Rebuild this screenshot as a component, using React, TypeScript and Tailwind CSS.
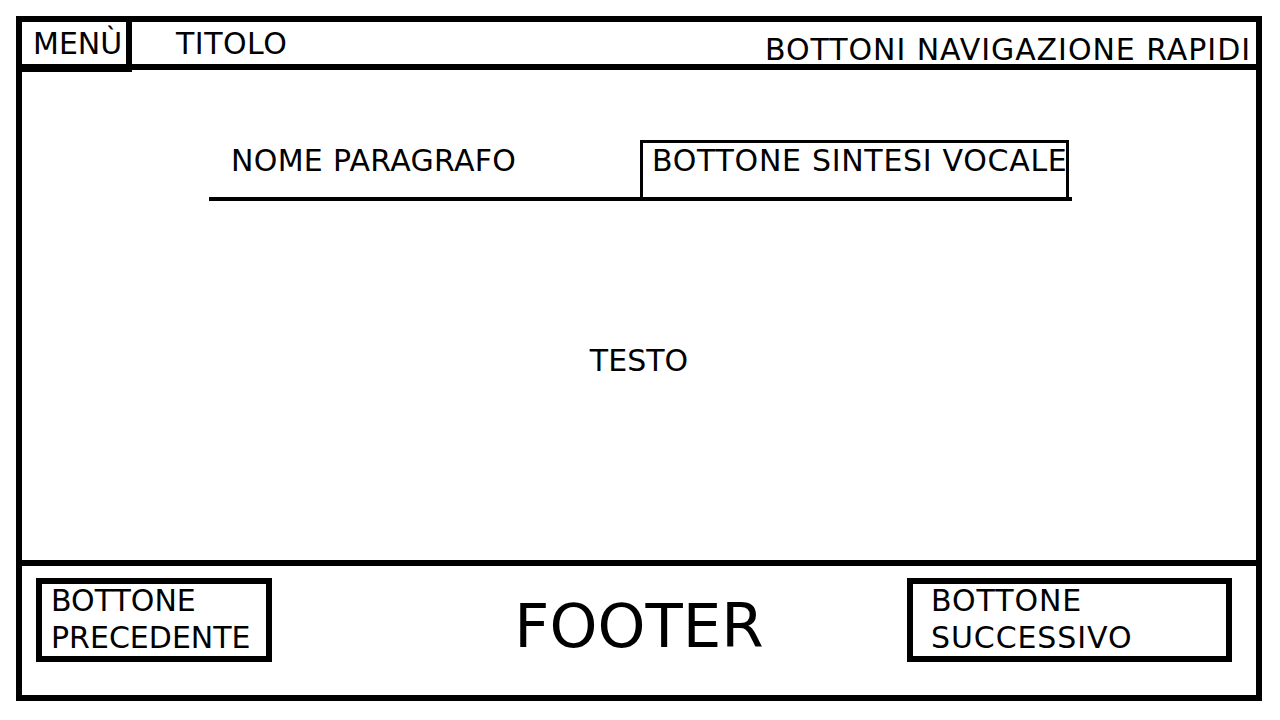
export default function App() {
  return (
    <div className="w-[1280px] h-[720px] bg-white text-black font-['DejaVu_Sans',sans-serif] pl-[16px] pt-[16px] overflow-hidden">
      <div className="w-[1246px] h-[685px] border-[6px] border-black flex flex-col">
        {/* Header */}
        <div className="h-[48px] shrink-0 border-b-[6px] border-black flex items-start">
          <div className="relative z-10 w-[110px] h-[50px] shrink-0 border-r-[6px] border-b-[6px] border-black pl-[11px] pt-[7px] text-[30px] leading-[30px]">
            MENÙ
          </div>
          <div className="ml-[44px] pt-[7px] text-[30px] leading-[30px] tracking-[0.5px]">TITOLO</div>
          <div className="ml-auto pr-[5px] pt-[13px] text-[30px] leading-[30px] tracking-[0.95px]">
            BOTTONI NAVIGAZIONE RAPIDI
          </div>
        </div>

        {/* Main */}
        <div className="flex-1 flex flex-col">
          <div className="ml-[187px] mt-[70px] w-[863px] flex items-start border-b-[4px] border-black">
            <div className="w-[431px] shrink-0 pl-[22px] pt-[6px] text-[30px] leading-[30px] tracking-[0.3px]">
              NOME PARAGRAFO
            </div>
            <div className="w-[429px] h-[57px] shrink-0 border-l-[3px] border-t-[3px] border-r-[3px] border-black pl-[9px] pt-[3px] text-[30px] leading-[30px] tracking-[0.7px] whitespace-nowrap">
              BOTTONE SINTESI VOCALE
            </div>
          </div>
          <div className="mt-[145px] text-center text-[30px] leading-[30px]">TESTO</div>
        </div>

        {/* Footer */}
        <div className="h-[135px] shrink-0 border-t-[6px] border-black grid grid-cols-[1fr_auto_1fr] items-start pl-[14px] pr-[14px]">
          <div className="justify-self-start mt-[12px] w-[236px] h-[84px] border-[6px] border-black pl-[9px] text-[30px] leading-[37px]">
            <div className="-mt-[2px]">
              BOTTONE
              <br />
              PRECEDENTE
            </div>
          </div>
          <div className="mt-[30px] text-[61px] leading-[60px]">FOOTER</div>
          <div className="justify-self-end mr-[10px] mt-[12px] w-[325px] h-[84px] border-[6px] border-black pl-[18px] text-[30px] leading-[37px] tracking-[0.9px]">
            <div className="-mt-[2px]">
              BOTTONE
              <br />
              SUCCESSIVO
            </div>
          </div>
        </div>
      </div>
    </div>
  );
}
